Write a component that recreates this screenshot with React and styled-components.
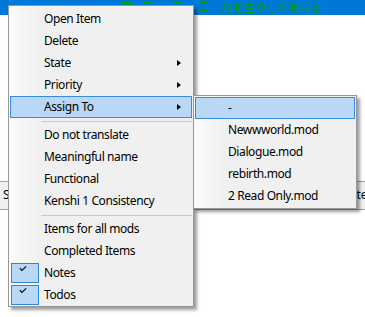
import React from "react";
import styled, { createGlobalStyle } from "styled-components";

const Global = createGlobalStyle`
  html, body { margin: 0; padding: 0; background: #fff; }
  body { font-family: "Noto Sans", "Open Sans", sans-serif; }
`;

const Screen = styled.div`
  position: relative;
  width: 365px;
  height: 317px;
  overflow: hidden;
  background: #fff;
`;

const TitleBar = styled.div`
  height: 15px;
  background: #0078d7;
  display: flex;
  align-items: flex-start;
  color: #00a000;
`;

const BoxIcon = styled.svg`
  flex: none;
  margin-top: 2px;
  margin-left: ${p => p.$gap}px;
`;

const Caption = styled.span`
  margin-left: ${p => p.$gap}px;
  font-family: "Noto Sans CJK JP", sans-serif;
  font-size: 11px;
  line-height: 14px;
  white-space: nowrap;
  letter-spacing: 0.2px;
`;

const GridHeader = styled.div`
  margin-top: 166px;
  height: 25px;
  background: #f0f0f0;
  border-top: 1px solid #a0a0a0;
  border-bottom: 1px solid #a0a0a0;
  display: flex;
  justify-content: space-between;
  align-items: center;
  padding: 0 0 2px 3px;
  box-sizing: content-box;
  font-size: 12px;
  color: #000;
  width: 375px;
`;

const Menu = styled.div`
  position: absolute;
  left: ${p => p.$x}px;
  top: ${p => p.$y}px;
  width: ${p => p.$w}px;
  box-sizing: border-box;
  padding: ${p => p.$pad};
  border: 1px solid #979797;
  background: linear-gradient(90deg, #fbfbfb 0, #f0f0f0 30px);
  box-shadow: 3px 3px 3px rgba(0, 0, 0, 0.38);
  font-size: 12px;
  color: #000;
`;

const Item = styled.div`
  position: relative;
  height: 22px;
  box-sizing: border-box;
  display: flex;
  align-items: center;
  padding-left: ${p => p.$indent}px;
  padding-bottom: 2px;
  border: 1px solid ${p => (p.$active ? "#3a8ae0" : "transparent")};
  background: ${p => (p.$active ? "#b8d8f5" : "transparent")};
  white-space: nowrap;
  letter-spacing: -0.4px;
`;

const Arrow = styled.span`
  position: absolute;
  right: 10px;
  top: 7px;
  width: 0;
  height: 0;
  border-left: 4px solid #000;
  border-top: 3.5px solid transparent;
  border-bottom: 3.5px solid transparent;
`;

const CheckBox = styled.span`
  position: absolute;
  left: 0;
  top: 0;
  width: 28px;
  height: 20px;
  box-sizing: border-box;
  border: 1px solid #2f86d8;
  background: #b8d8f5;
`;

const Tick = styled.svg`
  position: absolute;
  left: 7px;
  top: 2px;
`;

const Separator = styled.div`
  height: 6px;
  display: flex;
  align-items: center;
  padding-left: 31px;
  &::after {
    content: "";
    flex: 1;
    height: 1px;
    background: #c8c8c8;
  }
`;

const Boxed = ({ gap }) => (
  <BoxIcon $gap={gap} width="9" height="9" viewBox="0 0 9 9">
    <rect x="0.5" y="0.5" width="8" height="8" fill="none" stroke="#00a000" />
    <path d="M2.5 2.5 L6.5 6.5 M6.5 2.5 L2.5 6.5" stroke="#00a000" />
  </BoxIcon>
);

const mainItems = [
  { label: "Open Item" },
  { label: "Delete" },
  { label: "State", sub: true },
  { label: "Priority", sub: true },
  { label: "Assign To", sub: true, active: true },
  "sep",
  { label: "Do not translate" },
  { label: "Meaningful name" },
  { label: "Functional" },
  { label: "Kenshi 1 Consistency" },
  "sep",
  { label: "Items for all mods" },
  { label: "Completed Items" },
  { label: "Notes", checked: true },
  { label: "Todos", checked: true },
];

const mods = ["-", "Newwworld.mod", "Dialogue.mod", "rebirth.mod", "2 Read Only.mod"];

export default function App() {
  return (
    <Screen>
      <Global />
      <TitleBar>
        <Boxed gap={122} />
        <Boxed gap={12} />
        <Boxed gap={21} />
        <Boxed gap={17} />
        <Caption $gap={14}>角を生やしてあげる</Caption>
      </TitleBar>
      <GridHeader>
        <span>S</span>
        <span>text</span>
      </GridHeader>

      <Menu $x={8} $y={5} $w={186} $pad="2px 1px 0">
        {mainItems.map((it, i) =>
          it === "sep" ? (
            <Separator key={i} />
          ) : (
            <Item key={i} $indent={33} $active={it.active}>
              {it.checked && (
                <CheckBox>
                  <Tick width="8" height="6" viewBox="0 0 8 6">
                    <polyline points="0.8,2.2 2.8,4.4 7.2,0.4" fill="none" stroke="#000" strokeWidth="1.1" />
                  </Tick>
                </CheckBox>
              )}
              {it.label}
              {it.sub && <Arrow />}
            </Item>
          )
        )}
      </Menu>

      <Menu $x={193} $y={95} $w={164} $pad="1px">
        {mods.map((m, i) => (
          <Item key={m} $indent={32} $active={i === 0}>
            {m}
          </Item>
        ))}
      </Menu>
    </Screen>
  );
}
